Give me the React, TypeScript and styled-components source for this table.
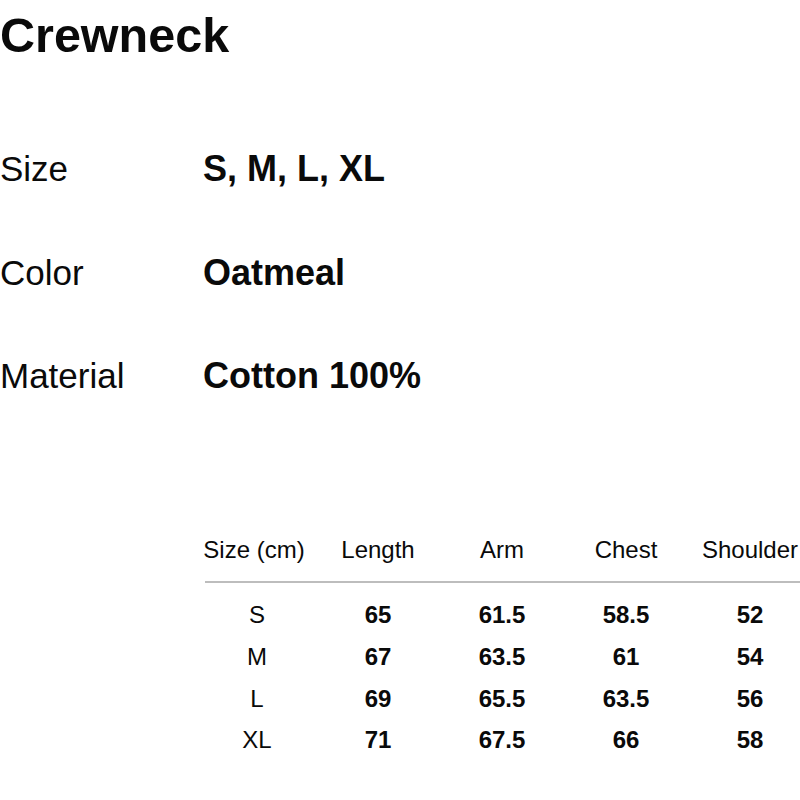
import React from "react";
import styled, { createGlobalStyle } from "styled-components";

const GlobalStyle = createGlobalStyle`
  html, body {
    margin: 0;
    padding: 0;
    background: #ffffff;
    overflow: hidden;
  }
  body {
    font-family: "Liberation Sans", Arial, Helvetica, sans-serif;
    color: #0a0a0a;
  }
`;

const Page = styled.div`
  width: 800px;
  height: 800px;
  display: flex;
  flex-direction: column;
`;

const Title = styled.h1`
  margin: 11px 0 0 0;
  font-size: 48.5px;
  line-height: 48px;
  font-weight: 700;
`;

const Specs = styled.div`
  margin-top: 90px;
  display: grid;
  grid-template-columns: 203px 1fr;
  align-items: baseline;
  row-gap: 63.5px;
`;

const SpecLabel = styled.div`
  font-size: 35px;
  line-height: 40px;
  font-weight: 400;
`;

const SpecValue = styled.div`
  font-size: 36px;
  line-height: 40px;
  font-weight: 700;
`;

const SizeTable = styled.div`
  margin-top: 139.7px;
  margin-left: 192px;
  width: 626px;
  display: flex;
  flex-direction: column;
`;

const TableRow = styled.div<{ $head?: boolean }>`
  display: grid;
  grid-template-columns: 130px 112px 136px 112px 136px;
  font-size: 24px;
  line-height: ${(p) => (p.$head ? "28px" : "41.7px")};
`;

const Cell = styled.div<{ $bold?: boolean; $shift?: number }>`
  text-align: center;
  white-space: nowrap;
  font-weight: ${(p) => (p.$bold ? 700 : 400)};
  margin-left: ${(p) => p.$shift ?? 0}px;
`;

const Divider = styled.div`
  margin: 17.3px 0 11.3px 13px;
  height: 2px;
  background: #bdbdbd;
`;

const specs = [
  { label: "Size", value: "S, M, L, XL" },
  { label: "Color", value: "Oatmeal" },
  { label: "Material", value: "Cotton 100%" },
];

const headers = ["Size (cm)", "Length", "Arm", "Chest", "Shoulder"];

const rows = [
  ["S", "65", "61.5", "58.5", "52"],
  ["M", "67", "63.5", "61", "54"],
  ["L", "69", "65.5", "63.5", "56"],
  ["XL", "71", "67.5", "66", "58"],
];

export default function App() {
  return (
    <Page>
      <GlobalStyle />
      <Title>Crewneck</Title>
      <Specs>
        {specs.map((s) => (
          <React.Fragment key={s.label}>
            <SpecLabel>{s.label}</SpecLabel>
            <SpecValue>{s.value}</SpecValue>
          </React.Fragment>
        ))}
      </Specs>
      <SizeTable>
        <TableRow $head>
          {headers.map((h, i) => (
            <Cell key={h} $shift={i === 0 ? -6 : 0}>
              {h}
            </Cell>
          ))}
        </TableRow>
        <Divider />
        {rows.map((r) => (
          <TableRow key={r[0]}>
            {r.map((v, i) => (
              <Cell key={i} $bold={i > 0}>
                {v}
              </Cell>
            ))}
          </TableRow>
        ))}
      </SizeTable>
    </Page>
  );
}
